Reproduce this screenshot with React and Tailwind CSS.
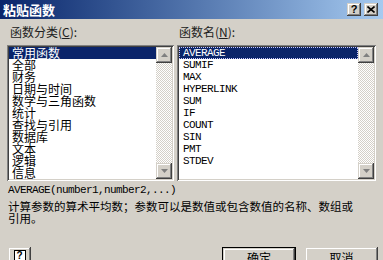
import React from 'react';

const cjk = { fontFamily: '"Noto Sans CJK SC", "Liberation Sans", sans-serif' };
const mono = { fontFamily: '"Liberation Mono", "Noto Sans CJK SC", monospace' };

const categories = ['常用函数', '全部', '财务', '日期与时间', '数学与三角函数', '统计', '查找与引用', '数据库', '文本', '逻辑', '信息'];
const functions = ['AVERAGE', 'SUMIF', 'MAX', 'HYPERLINK', 'SUM', 'IF', 'COUNT', 'SIN', 'PMT', 'STDEV'];

const raised = 'shadow-[inset_-1px_-1px_#404040,inset_1px_1px_#d4d0c8,inset_-2px_-2px_#808080,inset_2px_2px_#ffffff]';

const Arrow = ({ down }) => (
  <div className={`w-[16px] h-[16px] bg-[#d4d0c8] flex items-center justify-center ${raised}`}>
    <svg width="7" height="4" viewBox="0 0 7 4">
      <path d={down ? 'M0 0h7L3.5 4z' : 'M0 4h7L3.5 0z'} fill="#808080" />
    </svg>
  </div>
);

const ScrollBar = () => (
  <div className="w-[16px] flex flex-col shrink-0">
    <Arrow />
    <div className="flex-1 bg-[repeating-conic-gradient(#d4d0c8_0_25%,#ffffff_0_50%)] bg-[length:2px_2px]" />
    <Arrow down />
  </div>
);

const ListBox = ({ items, width, isMono }) => (
  <div
    className="h-[136px] bg-white p-[2px] flex shadow-[inset_1px_1px_#808080,inset_-1px_-1px_#ffffff,inset_2px_2px_#404040,inset_-2px_-2px_#d4d0c8]"
    style={{ width }}
  >
    <div className="flex-1 overflow-hidden">
      {items.map((it, i) => (
        <div
          key={it}
          className={`h-[12px] leading-[12px] whitespace-nowrap ${isMono ? 'pl-[4px] text-[11px] tracking-[-0.6px]' : 'pl-[3px] text-[12px]'} ${
            i === 0 ? 'bg-[#0a246a] text-white' : 'text-black'
          } ${i === 0 && isMono ? 'outline-1 outline-dotted outline-[#c8c8ff] -outline-offset-1' : ''}`}
          style={isMono ? mono : cjk}
        >
          {it}
        </div>
      ))}
    </div>
    <ScrollBar />
  </div>
);

const TitleButton = ({ children }) => (
  <div className={`w-[14px] h-[13px] bg-[#d4d0c8] flex items-center justify-center text-[11px] font-bold leading-none text-black ${raised}`} style={{ fontFamily: '"Liberation Sans", sans-serif' }}>
    {children}
  </div>
);

export default function App() {
  return (
    <div className="w-[383px] h-[260px] overflow-hidden bg-[#d4d0c8] text-black" style={cjk}>
      {/* Title bar */}
      <div className="h-[19px] flex items-center bg-linear-to-r from-[#0a246a] to-[#a6caf0] pl-[3px] pr-[5px]">
        <span className="text-white font-bold text-[13px] leading-none">粘贴函数</span>
        <div className="ml-auto flex gap-[3px]">
          <TitleButton>?</TitleButton>
          <TitleButton>
            <svg width="8" height="7" viewBox="0 0 8 7">
              <path d="M0.5 0.5L7.5 6.5M7.5 0.5L0.5 6.5" stroke="#000" strokeWidth="1.6" />
            </svg>
          </TitleButton>
        </div>
      </div>

      {/* Lists */}
      <div className="flex gap-[3px] pl-[7px] pt-[7px]">
        <div>
          <div className="h-[12px] leading-[12px] text-[12px] pl-[3px] mb-[7px] text-[#202020]">
            函数分类(<span className="underline">C</span>):
          </div>
          <ListBox items={categories} width={167} />
        </div>
        <div>
          <div className="h-[12px] leading-[12px] text-[12px] pl-[2px] mb-[7px] text-[#202020]">
            函数名(<span className="underline">N</span>):
          </div>
          <ListBox items={functions} width={199} isMono />
        </div>
      </div>

      {/* Syntax & description */}
      <div className="px-[8px]">
        <div className="mt-[3px] h-[12px] leading-[12px] text-[11px] tracking-[-0.6px]" style={mono}>
          AVERAGE(number1,number2,...)
        </div>
        <div className="mt-[4px] text-[11.5px] leading-[12px] whitespace-nowrap">
          计算参数的算术平均数；参数可以是数值或包含数值的名称、数组或
          <br />
          引用。
        </div>
      </div>

      {/* Buttons */}
      <div className="flex items-start mt-[23px] pl-[8px]">
        <div className={`w-[23px] h-[20px] bg-[#d4d0c8] flex items-start justify-center pt-[3px] ${raised}`}>
          <div className="w-[12px] h-[12px] border border-black bg-white flex items-center justify-center text-[10px] font-bold leading-none" style={{ fontFamily: '"Liberation Sans", sans-serif' }}>
            ?
          </div>
        </div>
        <div className="ml-[191px] w-[74px] h-[22px] border border-black bg-[#d4d0c8]">
          <div className={`w-full h-full flex items-center justify-center text-[12px] ${raised}`}>确定</div>
        </div>
        <div className={`ml-[9px] w-[73px] h-[22px] bg-[#d4d0c8] flex items-center justify-center text-[12px] ${raised}`}>
          取消
        </div>
      </div>
    </div>
  );
}
